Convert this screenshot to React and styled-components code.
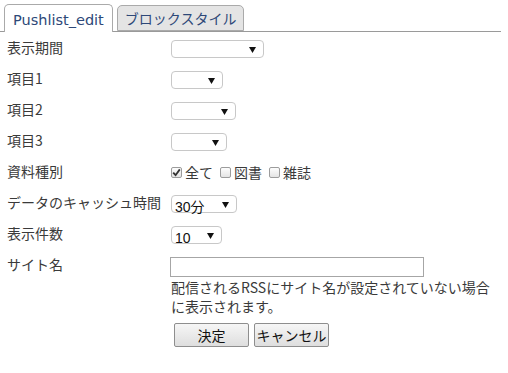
import React from "react"
import styled, { createGlobalStyle } from "styled-components"

const Global = createGlobalStyle`
    body {
        margin: 0;
        background: #fff;
        font-family: "Noto Sans CJK JP", "DejaVu Sans", sans-serif;
        font-size: 14px;
        color: #3a3a3a;
    }
`

const Page = styled.div`
    width: 508px;
    height: 373px;
    overflow: hidden;
`

const TabBar = styled.div`
    display: flex;
    align-items: flex-end;
    gap: 4px;
    height: 32px;
    width: 501px;
    padding-left: 4px;
    box-sizing: border-box;
    border-bottom: 1px solid #9a9a9a;
`

const Tab = styled.div`
    box-sizing: border-box;
    height: ${p => (p.$active ? "28px" : "26px")};
    margin-bottom: ${p => (p.$active ? "-1px" : "0")};
    padding: 0 ${p => (p.$active ? "8px" : "7px")};
    display: flex;
    align-items: center;
    border: 1px solid #aaa;
    border-bottom: ${p => (p.$active ? "none" : "1px solid #aaa")};
    border-radius: 5px 5px 0 0;
    background: ${p => (p.$active ? "#fff" : "#e4e4e4")};
    color: #2e4878;
    white-space: nowrap;
`

const TabLabel = styled.span`
    font-family: ${p => (p.$cjk ? '"Noto Sans CJK JP", sans-serif' : '"DejaVu Sans", sans-serif')};
    font-size: ${p => (p.$cjk ? "14px" : "14.5px")};
    padding-top: ${p => (p.$cjk ? "0" : "2px")};
`

const Form = styled.div`
    display: grid;
    grid-template-columns: 164px auto;
    grid-auto-rows: minmax(31px, auto);
    padding: 6px 0 0 7px;
    align-items: start;
`

const Label = styled.div`
    line-height: 18px;
    white-space: nowrap;
`

const Control = styled.div`
    margin-top: 2px;
    display: flex;
    flex-direction: ${p => (p.$column ? "column" : "row")};
    align-items: ${p => (p.$column ? "flex-start" : "center")};
`

const SelectWrap = styled.div`
    position: relative;
    width: ${p => p.$w}px;
    height: 18px;
    box-sizing: border-box;
    border: 1px solid #c8c8c8;
    border-radius: 4px;
    background: #fff;
`

const SelectBox = styled.select`
    appearance: none;
    border: none;
    background: transparent;
    width: 100%;
    height: 100%;
    padding: 0 0 0 3px;
    margin: 0;
    font-family: "Liberation Sans", Arial, "Noto Sans CJK JP", sans-serif;
    font-size: 14px;
    color: #111;
    outline: none;
`

const Arrow = styled.svg`
    position: absolute;
    right: 7px;
    top: 6px;
    pointer-events: none;
`

const Select = ({ w, value }) => (
    <SelectWrap $w={w}>
        <SelectBox defaultValue={value || ""}>
            <option value={value || ""}>{value || ""}</option>
        </SelectBox>
        <Arrow width="7" height="6" viewBox="0 0 7 6">
            <path d="M0 0 H7 L3.5 6 Z" fill="#111" />
        </Arrow>
    </SelectWrap>
)

const CheckGroup = styled.div`
    display: flex;
    align-items: center;
    margin-top: -1px;
`

const Box = styled.span`
    display: inline-flex;
    align-items: center;
    justify-content: center;
    width: 11px;
    height: 11px;
    box-sizing: border-box;
    border: 1px solid #9c9c9c;
    border-radius: 2px;
    background: linear-gradient(#fdfdfd, #e4e4e4);
    margin: 0 3px 0 ${p => (p.$first ? "0" : "7px")};
`

const CheckText = styled.span`
    line-height: 18px;
`

const Check = ({ checked, first, children }) => (
    <>
        <Box $first={first}>
            {checked && (
                <svg width="9" height="9" viewBox="0 0 9 9">
                    <path d="M1.2 4.6 L3.6 7.2 L7.8 1.4" fill="none" stroke="#333" strokeWidth="1.8" />
                </svg>
            )}
        </Box>
        <CheckText>{children}</CheckText>
    </>
)

const TextInput = styled.input`
    width: 254px;
    height: 20px;
    box-sizing: border-box;
    border: 1px solid #a6a6a6;
    margin: 0 0 0 -1px;
    padding: 0 3px;
    font-size: 14px;
`

const Help = styled.div`
    width: 330px;
    line-height: 19px;
    margin-top: 1px;
`

const Buttons = styled.div`
    display: flex;
    gap: 5px;
    padding: 7px 0 0 174px;
`

const Button = styled.button`
    width: 75px;
    height: 24px;
    box-sizing: border-box;
    border: 1px solid #8e8e8e;
    border-radius: 2px;
    background: linear-gradient(#f6f6f6, #dedede);
    font-family: "Noto Sans CJK JP", sans-serif;
    font-size: 14px;
    color: #111;
    padding: 0;
`

export default function App() {
    return (
        <Page>
            <Global />
            <TabBar>
                <Tab $active>
                    <TabLabel>Pushlist_edit</TabLabel>
                </Tab>
                <Tab>
                    <TabLabel $cjk>ブロックスタイル</TabLabel>
                </Tab>
            </TabBar>
            <Form>
                <Label>表示期間</Label>
                <Control><Select w={93} /></Control>

                <Label>項目1</Label>
                <Control><Select w={52} /></Control>

                <Label>項目2</Label>
                <Control><Select w={65} /></Control>

                <Label>項目3</Label>
                <Control><Select w={56} /></Control>

                <Label>資料種別</Label>
                <Control>
                    <CheckGroup>
                        <Check checked first>全て</Check>
                        <Check>図書</Check>
                        <Check>雑誌</Check>
                    </CheckGroup>
                </Control>

                <Label>データのキャッシュ時間</Label>
                <Control><Select w={66} value="30分" /></Control>

                <Label>表示件数</Label>
                <Control><Select w={51} value="10" /></Control>

                <Label>サイト名</Label>
                <Control $column>
                    <TextInput type="text" />
                    <Help>配信されるRSSにサイト名が設定されていない場合に表示されます。</Help>
                </Control>
            </Form>
            <Buttons>
                <Button>決定</Button>
                <Button>キャンセル</Button>
            </Buttons>
        </Page>
    )
}
